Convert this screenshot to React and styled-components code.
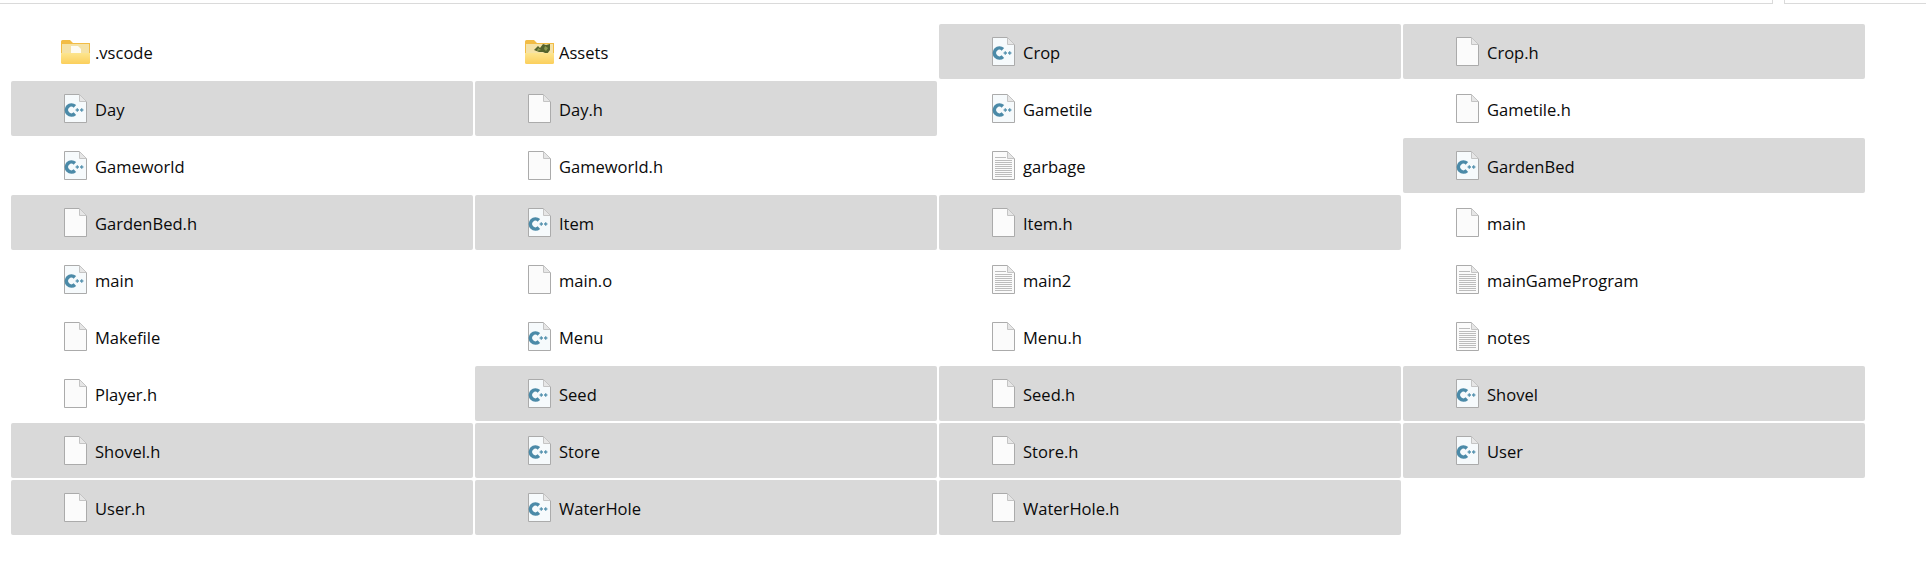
import React from 'react'
import styled, { createGlobalStyle } from 'styled-components'

const GlobalStyle = createGlobalStyle`
  html, body {
    margin: 0;
    padding: 0;
    background: #fff;
  }
`

const Page = styled.div`
  width: 1926px;
  height: 583px;
  overflow: hidden;
  background: #fff;
  font-family: "Open Sans", "Noto Sans", sans-serif;
`

const TopBar = styled.div`
  display: flex;
  height: 4px;
  gap: 11px;
`

const PathBox = styled.div`
  flex: 1;
  border-bottom: 1px solid #dadada;
  border-right: 1px solid #dadada;
`

const SearchBox = styled.div`
  width: 141px;
  flex: none;
  border-bottom: 1px solid #dadada;
  border-left: 1px solid #dadada;
`

const FileGrid = styled.div`
  display: grid;
  grid-template-columns: repeat(4, 462px);
  grid-auto-rows: 55px;
  gap: 2px;
  padding: 20px 0 0 11px;
`

const Row = styled.div`
  display: flex;
  align-items: center;
  gap: 4px;
  padding-left: 49px;
  border-radius: 2px;
  background: ${({ $selected }) => ($selected ? '#d9d9d9' : 'transparent')};
`

const IconSlot = styled.div`
  width: 31px;
  height: 30px;
  display: flex;
  align-items: center;
  justify-content: center;
  flex: none;
`

const Name = styled.span`
  font-size: 16.55px;
  line-height: 24px;
  padding-top: 2px;
  color: #0a0a0a;
  white-space: nowrap;
`

const PageSheet = ({ tint = '#fbfbfb' }) => (
  <>
    <path d="M.5.5H15.5L22.5 7.5V28.5H.5Z" fill={tint} stroke="#ababab" />
    <path d="M15.5.5V7.5H22.5Z" fill="#e6e6e6" stroke="#c4c4c4" />
  </>
)

const FileIcon = () => (
  <svg width="23" height="29" viewBox="0 0 23 29">
    <PageSheet />
  </svg>
)

const CppIcon = () => (
  <svg width="23" height="29" viewBox="0 0 23 29">
    <PageSheet tint="#f6fafc" />
    <path d="M10.9 12.4A5 5 0 1 0 10.9 19.6" fill="none" stroke="#4b8aa8" strokeWidth="3.6" />
    <path d="M11.6 16H15M13.3 14.2V17.8M16 16H19.4M17.7 14.2V17.8" stroke="#5a95b1" strokeWidth="1.3" fill="none" />
  </svg>
)

const TextIcon = () => (
  <svg width="23" height="29" viewBox="0 0 23 29">
    <PageSheet />
    <path
      d="M3 6.5H14M3 9.5H20M3 11.5H20M3 13.5H20M3 15.5H20M3 17.5H20M3 19.5H20M3 21.5H20M3 23.5H20M3 25.5H20"
      stroke="#bcbcbc"
      fill="none"
    />
  </svg>
)

const FolderIcon = ({ thumb }) => (
  <svg width="29" height="24" viewBox="0 0 29 24">
    <defs>
      <linearGradient id="folderFront" x1="0" y1="0" x2="0" y2="1">
        <stop offset="0" stopColor="#fde58e" />
        <stop offset="1" stopColor="#fbcf5c" />
      </linearGradient>
    </defs>
    <path d="M0 1.5A1.5 1.5 0 0 1 1.5 0H9L12 3H29V14H0Z" fill="#f2bc45" />
    <rect x="1" y="4" width="27" height="10" fill="#f5e2a6" />
    {thumb === 'doc' && <path d="M10 6H17L20 9V14H10Z" fill="#fdfbf3" />}
    {thumb === 'leaf' && (
      <>
        <path d="M9 10L13 6L15 8L18 4L21 5L25 4L25 10L22 14L18 12L14 12Z" fill="#54632c" />
        <path d="M13 8L16 10L12 11ZM20 6L23 8L21 11L19 9Z" fill="#8c9a4e" />
      </>
    )}
    <path d="M0 13H29V22.5A1.5 1.5 0 0 1 27.5 24H1.5A1.5 1.5 0 0 1 0 22.5Z" fill="url(#folderFront)" />
  </svg>
)

const icons = {
  cpp: <CppIcon />,
  file: <FileIcon />,
  text: <TextIcon />,
  vscode: <FolderIcon thumb="doc" />,
  assets: <FolderIcon thumb="leaf" />,
}

const files = [
  { name: '.vscode', kind: 'vscode' },
  { name: 'Assets', kind: 'assets' },
  { name: 'Crop', kind: 'cpp', selected: true },
  { name: 'Crop.h', kind: 'file', selected: true },
  { name: 'Day', kind: 'cpp', selected: true },
  { name: 'Day.h', kind: 'file', selected: true },
  { name: 'Gametile', kind: 'cpp' },
  { name: 'Gametile.h', kind: 'file' },
  { name: 'Gameworld', kind: 'cpp' },
  { name: 'Gameworld.h', kind: 'file' },
  { name: 'garbage', kind: 'text' },
  { name: 'GardenBed', kind: 'cpp', selected: true },
  { name: 'GardenBed.h', kind: 'file', selected: true },
  { name: 'Item', kind: 'cpp', selected: true },
  { name: 'Item.h', kind: 'file', selected: true },
  { name: 'main', kind: 'file' },
  { name: 'main', kind: 'cpp' },
  { name: 'main.o', kind: 'file' },
  { name: 'main2', kind: 'text' },
  { name: 'mainGameProgram', kind: 'text' },
  { name: 'Makefile', kind: 'file' },
  { name: 'Menu', kind: 'cpp' },
  { name: 'Menu.h', kind: 'file' },
  { name: 'notes', kind: 'text' },
  { name: 'Player.h', kind: 'file' },
  { name: 'Seed', kind: 'cpp', selected: true },
  { name: 'Seed.h', kind: 'file', selected: true },
  { name: 'Shovel', kind: 'cpp', selected: true },
  { name: 'Shovel.h', kind: 'file', selected: true },
  { name: 'Store', kind: 'cpp', selected: true },
  { name: 'Store.h', kind: 'file', selected: true },
  { name: 'User', kind: 'cpp', selected: true },
  { name: 'User.h', kind: 'file', selected: true },
  { name: 'WaterHole', kind: 'cpp', selected: true },
  { name: 'WaterHole.h', kind: 'file', selected: true },
]

export default function App() {
  return (
    <Page>
      <GlobalStyle />
      <TopBar>
        <PathBox />
        <SearchBox />
      </TopBar>
      <FileGrid>
        {files.map((file, i) => (
          <Row key={i} $selected={file.selected}>
            <IconSlot>{icons[file.kind]}</IconSlot>
            <Name>{file.name}</Name>
          </Row>
        ))}
      </FileGrid>
    </Page>
  )
}
